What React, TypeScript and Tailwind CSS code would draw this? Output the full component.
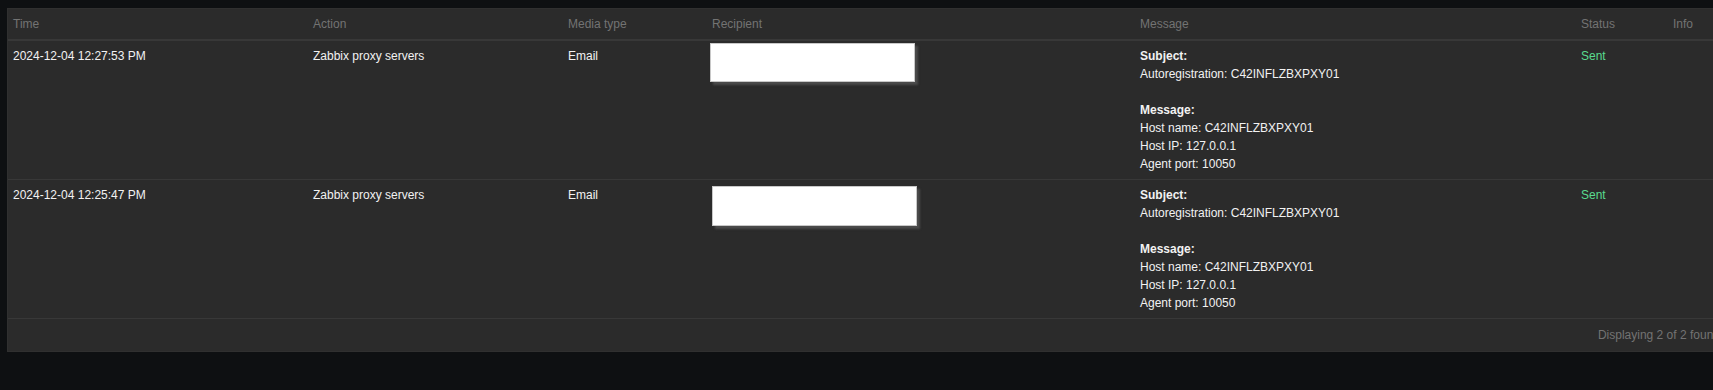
import React from "react";

interface Alert { time: string; action: string; mediaType: string; host: string; ip: string; port: string; status: string; boxShift: string; }

const ALERTS: Alert[] = [
  { time: "2024-12-04 12:27:53 PM", action: "Zabbix proxy servers", mediaType: "Email", host: "C42INFLZBXPXY01", ip: "127.0.0.1", port: "10050", status: "Sent", boxShift: "-ml-[2px] -mt-[4px] h-[39px]" },
  { time: "2024-12-04 12:25:47 PM", action: "Zabbix proxy servers", mediaType: "Email", host: "C42INFLZBXPXY01", ip: "127.0.0.1", port: "10050", status: "Sent", boxShift: "ml-0 mt-0 h-[40px]" },
];

const HEADERS = ["Time", "Action", "Media type", "Recipient", "Message", "Status", "Info"];

export default function App() {
  return (
    <div className="h-[390px] w-full overflow-hidden bg-[#0e1012] pt-2 pl-[7px] font-['Liberation_Sans',Arial,sans-serif] text-[12px] leading-[18px]">
      <div className="w-[1719px] border border-[#303030] bg-[#2b2b2b]">
        <table className="w-full table-fixed border-collapse">
          <colgroup>
            <col className="w-[300px]" />
            <col className="w-[255px]" />
            <col className="w-[144px]" />
            <col className="w-[428px]" />
            <col className="w-[441px]" />
            <col className="w-[92px]" />
            <col />
          </colgroup>
          <thead>
            <tr className="border-b-2 border-[#383838]">
              {HEADERS.map((h) => (
                <th key={h} className="px-[5px] py-[6px] text-left font-normal text-[#737373]">{h}</th>
              ))}
            </tr>
          </thead>
          <tbody>
            {ALERTS.map((a, i) => (
              <tr key={i} className="border-b border-[#383838] align-top text-[#f2f2f2]">
                <td className="px-[5px] py-[6px]">{a.time}</td>
                <td className="px-[5px] py-[6px]">{a.action}</td>
                <td className="px-[5px] py-[6px]">{a.mediaType}</td>
                <td className="px-[5px] py-[6px]">
                  <div className={`w-[205px] border border-[#c8c8c8] bg-white shadow-[3px_3px_2px_#4a4a4a] ${a.boxShift}`} />
                </td>
                <td className="px-[5px] py-[6px]">
                  <div className="font-bold">Subject:</div>
                  <div>Autoregistration: {a.host}</div>
                  <div>&nbsp;</div>
                  <div className="font-bold">Message:</div>
                  <div>Host name: {a.host}</div>
                  <div>Host IP: {a.ip}</div>
                  <div>Agent port: {a.port}</div>
                </td>
                <td className="px-[5px] py-[6px] text-[#59db8f]">{a.status}</td>
                <td className="px-[5px] py-[6px]"></td>
              </tr>
            ))}
          </tbody>
        </table>
        <div className="px-[5px] py-[7px] text-right text-[#737373]">Displaying 2 of 2 found</div>
      </div>
    </div>
  );
}
